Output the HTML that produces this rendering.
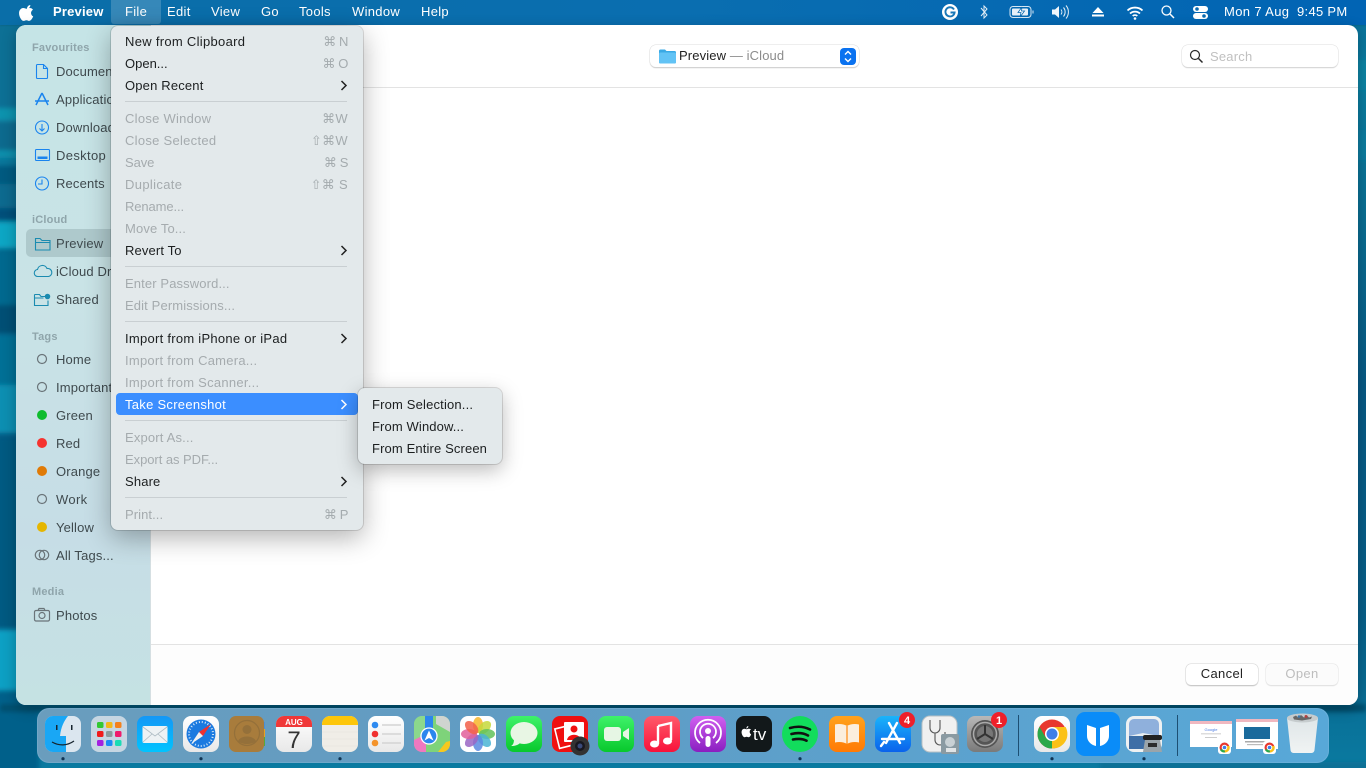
<!DOCTYPE html>
<html><head><meta charset="utf-8"><style>
html,body{margin:0;padding:0;width:1366px;height:768px;overflow:hidden;background:#055a80}
*{box-sizing:border-box}
body{font-family:"Liberation Sans",sans-serif;font-size:13px;position:relative}
.a{position:absolute;white-space:nowrap;line-height:16px}
.mb{position:absolute;left:0;top:0;width:1366px;height:25px;background:linear-gradient(90deg,#0a6ea8,#0a6eb0 50%,#0164b4);box-shadow:0 0 2px rgba(0,0,0,.2)}
.mb span{position:absolute;top:4px;line-height:16px;color:#fff;letter-spacing:.3px;white-space:nowrap}
.win{position:absolute;left:16px;top:25px;width:1342px;height:680px;background:#fff;border-radius:10px;overflow:hidden;box-shadow:0 4px 14px rgba(0,0,0,.28)}
.side{position:absolute;left:0;top:0;width:135px;height:680px;background:linear-gradient(180deg,#c5e4e6,#c9e3e6 40%,#c6dde6 75%,#c5e2e3);border-right:1px solid #d5dfe2}
.s{position:absolute;left:40px;margin-top:1px;color:#3f4a4e;letter-spacing:.15px;line-height:16px;white-space:nowrap}
.h{position:absolute;left:16px;color:#8fa5ab;font-size:11px;font-weight:bold;letter-spacing:.2px;line-height:14px}
.menu{position:absolute;left:111px;top:26px;width:252px;height:504px;background:#e3e9eb;border-radius:7px;box-shadow:0 0 0 1px rgba(0,0,0,.13),0 8px 26px rgba(0,0,0,.3)}
.m{position:absolute;left:14px;margin-top:1px;line-height:16px;color:#1c1f20;letter-spacing:.27px;white-space:nowrap}
.d{color:#a5abae}
.k{position:absolute;right:15px;margin-top:1px;line-height:16px;color:#a4abae;letter-spacing:.3px;white-space:nowrap;font-family:"Liberation Sans","DejaVu Sans",sans-serif}
.k.n{letter-spacing:-.4px}
.sep{position:absolute;left:14px;width:222px;height:1px;background:#c9cfd2}
.chev{position:absolute;left:229px;width:8px;height:11px}
</style></head><body>
<svg class="a" style="left:0;top:0" width="1366" height="768" viewBox="0 0 1366 768">
<defs>
<filter id="b6" x="-50%" y="-50%" width="200%" height="200%"><feGaussianBlur stdDeviation="2"/></filter>
<linearGradient id="wp" x1="0" y1="0" x2="0" y2="1"><stop offset="0" stop-color="#0a6d98"/><stop offset=".1" stop-color="#0a7fa2"/><stop offset=".28" stop-color="#0a6f94"/><stop offset=".5" stop-color="#075a85"/><stop offset=".8" stop-color="#07608a"/><stop offset="1" stop-color="#0a7aa0"/></linearGradient>
</defs>
<rect width="1366" height="768" fill="url(#wp)"/>
<g filter="url(#b6)">
<rect x="-6" y="20" width="26" height="90" fill="#0a6f95"/>
<rect x="-6" y="108" width="26" height="12" fill="#0b93ae"/>
<rect x="-6" y="122" width="26" height="28" fill="#086a8e"/>
<rect x="-6" y="150" width="26" height="8" fill="#0c8eac"/>
<rect x="-6" y="166" width="26" height="18" fill="#055a80"/>
<rect x="-6" y="184" width="26" height="24" fill="#086b8f"/>
<rect x="-6" y="208" width="26" height="12" fill="#04507a"/>
<rect x="-6" y="222" width="26" height="26" fill="#08a6c4"/>
<rect x="-6" y="250" width="26" height="55" fill="#06698f"/>
<rect x="-6" y="305" width="26" height="28" fill="#044f75"/>
<rect x="-6" y="335" width="26" height="50" fill="#066f96"/>
<rect x="-6" y="385" width="26" height="48" fill="#098fb2"/>
<rect x="-6" y="437" width="26" height="190" fill="#055a82"/>
<rect x="-6" y="630" width="26" height="60" fill="#08a0c4"/>
<rect x="-6" y="692" width="45" height="80" fill="#04608a"/>
<rect x="1356" y="60" width="16" height="30" fill="#0a84a4"/>
<rect x="1356" y="130" width="16" height="30" fill="#0a7da0"/>
<rect x="0" y="704" width="1366" height="8" fill="#045070"/>
<rect x="1100" y="762" width="270" height="10" fill="#0a6f95"/>
</g>
</svg>

<div class="mb">
<svg class="a" style="left:19px;top:4px" width="16" height="17" viewBox="0 0 16 17"><path fill="#fff" d="M11.3 1c.1 1-.3 1.900-.9 2.600-.6.700-1.500 1.200-2.400 1.100-.1-1 .4-1.900.9-2.500C9.500 1.500 10.500 1 11.300 1zM14.200 12.400c-.4.900-.6 1.300-1.100 2.100-.7 1.100-1.700 2.400-2.900 2.400-1.100 0-1.400-.7-2.800-.7s-1.800.7-2.900.7c-1.200 0-2.100-1.200-2.800-2.300C-.2 11.600-.4 8 .8 6.100c.9-1.300 2.200-2.100 3.500-2.100s2.200.8 3.200.8 1.700-.8 3.300-.8c1.200 0 2.400.6 3.200 1.700-2.900 1.600-2.400 5.600.2 6.700z"/></svg>
<span style="left:53px;font-weight:bold;letter-spacing:.2px">Preview</span>
<div class="a" style="left:111px;top:0;width:50px;height:24px;background:rgba(255,255,255,.18);border-radius:0 0 3px 3px"></div>
<span style="left:125px">File</span>
<span style="left:167px">Edit</span>
<span style="left:211px">View</span>
<span style="left:261px">Go</span>
<span style="left:299px">Tools</span>
<span style="left:352px">Window</span>
<span style="left:421px">Help</span>
<svg class="a" style="left:940px;top:0" width="270" height="25" viewBox="940 0 270 25">
<circle cx="950" cy="12" r="8" fill="#fff"/><path d="M954 9.500A4.600 4.600 0 1 0 954.600 12.500H950.500" fill="none" stroke="#1a78b8" stroke-width="1.900"/>
<path d="M981 8l6 7-3 3V6l3 3-6 7" fill="none" stroke="#e4eef6" stroke-width="1"/>
<rect x="1010" y="6.500" width="21" height="11" rx="3" fill="none" stroke="#d8e8f4"/><rect x="1012" y="8.500" width="16" height="7" rx="1" fill="#e6f0f8"/><path d="M1022 7l-4 5.500h3l-1 4.500 4.500-6h-3z" fill="#fff" stroke="#0a6ab0" stroke-width=".8"/><rect x="1032.500" y="10.500" width="1" height="3" fill="#d8e8f4"/>
<path d="M1052 9.500h3l4-3.500v12l-4-3.500h-3z" fill="#f0f6fb"/><path d="M1061 9.500a4 4 0 0 1 0 5M1063.500 7.500a7 7 0 0 1 0 9M1066 5.500a10 10 0 0 1 0 13" fill="none" stroke="#e8f1f8" stroke-width="1"/>
<path d="M1098 7l5.500 6h-11z" fill="#fff"/><rect x="1092" y="14.500" width="12" height="2" fill="#fff"/>
<path d="M1127.500 10.500a11 11 0 0 1 15 0M1130 13.500a7.500 7.500 0 0 1 10 0M1132.700 16a3.500 3.500 0 0 1 4.600 0" fill="none" stroke="#fff" stroke-width="1.800"/><circle cx="1135" cy="18.500" r="1.300" fill="#fff"/>
<circle cx="1166.500" cy="10.500" r="4.500" fill="none" stroke="#fff" stroke-width="1.300"/><path d="M1170 14l4 4" stroke="#fff" stroke-width="1.500"/>
<rect x="1193" y="6" width="15" height="6" rx="3" fill="#fff"/><rect x="1193" y="13" width="15" height="6" rx="3" fill="#fff"/><circle cx="1197" cy="9" r="1.800" fill="#0a6ab0"/><circle cx="1204" cy="16" r="1.800" fill="#0a6ab0"/>
</svg>
<span style="left:1224px;letter-spacing:.36px">Mon 7 Aug</span>
<span style="left:1297px;letter-spacing:.3px">9:45 PM</span>
</div>

<div class="win">
<div class="side">
<div class="h" style="top:16px">Favourites</div>
<div class="s" style="top:38px">Documents</div>
<div class="s" style="top:66px">Applications</div>
<div class="s" style="top:94px">Downloads</div>
<div class="s" style="top:122px;letter-spacing:.35px">Desktop</div>
<div class="s" style="top:150px">Recents</div>
<div class="h" style="top:188px">iCloud</div>
<div class="a" style="left:10px;top:204px;width:115px;height:28px;background:#aec9cc;border-radius:5px"></div>
<div class="s" style="top:210px">Preview</div>
<div class="s" style="top:238px">iCloud Drive</div>
<div class="s" style="top:266px">Shared</div>
<div class="h" style="top:305px">Tags</div>
<div class="s" style="top:326px">Home</div>
<div class="s" style="top:354px">Important</div>
<div class="s" style="top:382px">Green</div>
<div class="s" style="top:410px">Red</div>
<div class="s" style="top:438px">Orange</div>
<div class="s" style="top:466px;letter-spacing:.35px">Work</div>
<div class="s" style="top:494px">Yellow</div>
<div class="s" style="top:522px">All Tags...</div>
<div class="h" style="top:560px">Media</div>
<div class="s" style="top:582px">Photos</div>
<svg class="a" style="left:0;top:0" width="40" height="680" viewBox="16 25 40 680">
<g fill="none" stroke="#1a84ee" stroke-width="1.100">
<path d="M37.500 64.500h6l4 4v9a1 1 0 0 1-1 1h-9a1 1 0 0 1-1-1v-12a1 1 0 0 1 1-1zM43.500 64.500v4h4"/>
<path d="M36 105l6-12M48 105l-6-12M35 101h14" stroke-width="1.500"/>
<circle cx="42" cy="127.500" r="6.500"/><path d="M42 124v6.500M39.500 128.500l2.500 2.500 2.500-2.500"/>
<rect x="35.500" y="149.500" width="14" height="11" rx="1"/><rect x="37.500" y="156.500" width="10" height="2.500" fill="#1a84ee" stroke="none"/>
<circle cx="42" cy="183.500" r="6.500"/><path d="M42 179.500v4.500h-4"/>
</g>
<g fill="none" stroke="#1b8bb0" stroke-width="1.100">
<path d="M35.500 238.500h4.500l2 2h8v9.500h-14.500zM35.500 242.500h14.500"/>
<path d="M38 276.500a3.500 3.500 0 0 1-.5-7 5 5 0 0 1 9.500-1 4 4 0 0 1 1.500 8z"/>
<path d="M34.500 294.500h5l1.500 2h4M34.500 294.500v11h13.500v-5M34.500 298h9"/><circle cx="47.500" cy="296.500" r="2.200" fill="#1b8bb0"/>
</g>
<g fill="none" stroke="#6a7479" stroke-width="1.200">
<circle cx="42" cy="359" r="4.500"/><circle cx="42" cy="387" r="4.500"/><circle cx="42" cy="499" r="4.500"/>
<circle cx="40" cy="555" r="4.700"/><circle cx="44" cy="555" r="4.700"/>
<rect x="34.500" y="610.500" width="15" height="10.500" rx="1.500"/><circle cx="42" cy="615.500" r="3"/><path d="M38 610.500l1-2h5l1 2"/>
</g>
<circle cx="42" cy="415" r="5" fill="#0ebc2e"/><circle cx="42" cy="443" r="5" fill="#f5332f"/><circle cx="42" cy="471" r="5" fill="#e07a06"/><circle cx="42" cy="527" r="5" fill="#e5b600"/>
</svg>
</div>
<div class="a" style="left:135px;top:62px;width:1207px;height:1px;background:#e3e3e3"></div>
<div class="a" style="left:135px;top:619px;width:1207px;height:1px;background:#e3e3e3"></div>
<div class="a" style="left:135px;top:620px;width:1207px;height:60px;background:#fdfdfd"></div>

<div class="a" style="left:634px;top:20px;width:209px;height:22px;background:#fff;border-radius:6px;box-shadow:0 0 0 .5px #dcdcdc,0 1px 1px #b8b8b8"></div>
<svg class="a" style="left:643px;top:24px" width="17" height="15" viewBox="0 0 17 15"><path d="M0 2a1.500 1.500 0 0 1 1.500-1.500h4.500l1.500 1.500h8a1.500 1.500 0 0 1 1.500 1.500v9.500a1.500 1.500 0 0 1-1.500 1.500h-14a1.500 1.500 0 0 1-1.500-1.500z" fill="#3aa9e4"/><rect y="3.500" width="17" height="11" rx="1.500" fill="#62c3f5"/></svg>
<div class="a" style="left:663px;top:23px;color:#222;letter-spacing:.12px">Preview <span style="color:#8c8c8c">— iCloud</span></div>
<svg class="a" style="left:824px;top:23px" width="16" height="17" viewBox="0 0 16 17"><rect width="16" height="17" rx="4" fill="#0a72f0"/><path d="M5 6.500l3-3 3 3M5 10.500l3 3 3-3" fill="none" stroke="#fff" stroke-width="1.400"/></svg>

<div class="a" style="left:1166px;top:20px;width:156px;height:22px;background:#fff;border-radius:6px;box-shadow:0 0 0 .5px #dedede,0 1px 1px #c4c4c4"></div>
<svg class="a" style="left:1173px;top:24px" width="15" height="15" viewBox="0 0 15 15"><circle cx="6" cy="6" r="4.500" fill="none" stroke="#2a2a2a" stroke-width="1.200"/><path d="M9.500 9.500l4 4" stroke="#2a2a2a" stroke-width="1.500"/></svg>
<div class="a" style="left:1194px;top:24px;color:#c0c0c0;letter-spacing:.2px">Search</div>

<div class="a" style="left:1170px;top:639px;width:72px;height:21px;background:#fff;border-radius:5px;box-shadow:0 0 0 .5px #d4d4d4,0 1px 1px #aaa;text-align:center;line-height:20px;color:#222;letter-spacing:.35px">Cancel</div>
<div class="a" style="left:1250px;top:639px;width:72px;height:21px;background:#fbfbfb;border-radius:5px;box-shadow:0 0 0 .5px #e4e4e4,0 1px 1px #d8d8d8;text-align:center;line-height:20px;color:#bdbdbd;letter-spacing:.35px">Open</div>
</div>

<div class="menu">
<div class="m" style="top:7px;letter-spacing:.3px">New from Clipboard</div><div class="k n" style="top:7px">⌘ N</div>
<div class="m" style="top:29px;letter-spacing:0">Open...</div><div class="k n" style="top:29px">⌘ O</div>
<div class="m" style="top:51px;letter-spacing:.17px">Open Recent</div>
<div class="sep" style="top:75px"></div>
<div class="m d" style="top:84px">Close Window</div><div class="k" style="top:84px">⌘W</div>
<div class="m d" style="top:106px;letter-spacing:.28px">Close Selected</div><div class="k" style="top:106px">⇧⌘W</div>
<div class="m d" style="top:128px;letter-spacing:-.1px">Save</div><div class="k n" style="top:128px">⌘ S</div>
<div class="m d" style="top:150px;letter-spacing:.35px">Duplicate</div><div class="k" style="top:150px">⇧⌘ S</div>
<div class="m d" style="top:172px;letter-spacing:-.1px">Rename...</div>
<div class="m d" style="top:194px;letter-spacing:.13px">Move To...</div>
<div class="m" style="top:216px;letter-spacing:.13px">Revert To</div>
<div class="sep" style="top:240px"></div>
<div class="m d" style="top:249px;letter-spacing:.12px">Enter Password...</div>
<div class="m d" style="top:271px;letter-spacing:.13px">Edit Permissions...</div>
<div class="sep" style="top:295px"></div>
<div class="m" style="top:304px">Import from iPhone or iPad</div>
<div class="m d" style="top:326px;letter-spacing:.25px">Import from Camera...</div>
<div class="m d" style="top:348px;letter-spacing:.26px">Import from Scanner...</div>
<div class="a" style="left:5px;top:367px;width:242px;height:22px;background:#3b8eff;border-radius:4px"></div>
<div class="m" style="top:370px;color:#fff;letter-spacing:.28px">Take Screenshot</div>
<div class="sep" style="top:394px"></div>
<div class="m d" style="top:403px;letter-spacing:.17px">Export As...</div>
<div class="m d" style="top:425px;letter-spacing:-.05px">Export as PDF...</div>
<div class="m" style="top:447px;letter-spacing:.15px">Share</div>
<div class="sep" style="top:471px"></div>
<div class="m d" style="top:480px;letter-spacing:.07px">Print...</div><div class="k n" style="top:480px">⌘ P</div>
<svg class="chev" style="top:54px" viewBox="0 0 8 11"><path d="M1.500 1l4.500 4.500-4.500 4.500" fill="none" stroke="#222" stroke-width="1.500"/></svg>
<svg class="chev" style="top:219px" viewBox="0 0 8 11"><path d="M1.500 1l4.500 4.500-4.500 4.500" fill="none" stroke="#222" stroke-width="1.500"/></svg>
<svg class="chev" style="top:307px" viewBox="0 0 8 11"><path d="M1.500 1l4.500 4.500-4.500 4.500" fill="none" stroke="#222" stroke-width="1.500"/></svg>
<svg class="chev" style="top:373px" viewBox="0 0 8 11"><path d="M1.500 1l4.500 4.500-4.500 4.500" fill="none" stroke="#fff" stroke-width="1.500"/></svg>
<svg class="chev" style="top:450px" viewBox="0 0 8 11"><path d="M1.500 1l4.500 4.500-4.500 4.500" fill="none" stroke="#222" stroke-width="1.500"/></svg>
</div>

<div class="a" style="left:358px;top:388px;width:144px;height:76px;background:#e3e9eb;border-radius:7px;box-shadow:0 0 0 1px rgba(0,0,0,.13),0 6px 20px rgba(0,0,0,.28)">
<div class="m" style="top:8px;letter-spacing:.17px">From Selection...</div>
<div class="m" style="top:30px;letter-spacing:.12px">From Window...</div>
<div class="m" style="top:52px;letter-spacing:.13px">From Entire Screen</div>
</div>

<svg class="a" style="left:0;top:700px" width="1366" height="68" viewBox="0 700 1366 68" font-family="Liberation Sans, sans-serif">
<defs>
<linearGradient id="dock" x1="0" x2="1" y1="0" y2="0"><stop offset="0" stop-color="#6a9dbd"/><stop offset=".4" stop-color="#5f9cc4"/><stop offset="1" stop-color="#58a8d8"/></linearGradient>
<linearGradient id="bl" x1="0" x2="0" y1="0" y2="1"><stop offset="0" stop-color="#1597f5"/><stop offset="1" stop-color="#00c4ff"/></linearGradient>
<linearGradient id="gr" x1="0" x2="0" y1="0" y2="1"><stop offset="0" stop-color="#3ef26a"/><stop offset="1" stop-color="#08c82c"/></linearGradient>
<linearGradient id="rd" x1="0" x2="0" y1="0" y2="1"><stop offset="0" stop-color="#ff5a6a"/><stop offset="1" stop-color="#f8123a"/></linearGradient>
<linearGradient id="pu" x1="0" x2="0" y1="0" y2="1"><stop offset="0" stop-color="#d060f0"/><stop offset="1" stop-color="#8a1ec0"/></linearGradient>
<linearGradient id="as" x1="0" x2="0" y1="0" y2="1"><stop offset="0" stop-color="#1ab4fa"/><stop offset="1" stop-color="#0a62ec"/></linearGradient>
<linearGradient id="or" x1="0" x2="0" y1="0" y2="1"><stop offset="0" stop-color="#ffa21c"/><stop offset="1" stop-color="#ff7a04"/></linearGradient>
<linearGradient id="gy" x1="0" x2="0" y1="0" y2="1"><stop offset="0" stop-color="#b8b8b8"/><stop offset="1" stop-color="#7a7a7a"/></linearGradient>
<linearGradient id="wh" x1="0" x2="0" y1="0" y2="1"><stop offset="0" stop-color="#fff"/><stop offset="1" stop-color="#e8e8e8"/></linearGradient>
<linearGradient id="tr" x1="0" x2="0" y1="0" y2="1"><stop offset="0" stop-color="#dfe6e8"/><stop offset="1" stop-color="#f0f3f3"/></linearGradient>
</defs>
<rect x="37" y="708" width="1292" height="55" rx="12" fill="url(#dock)"/>
<rect x="37.500" y="708.500" width="1291" height="54" rx="12" fill="none" stroke="#8cc0de" stroke-opacity=".3"/>
<rect x="1018" y="715" width="1" height="41" fill="#1d4f73"/><rect x="1177" y="715" width="1" height="41" fill="#1d4f73"/>
<g fill="#0f3454"><circle cx="63" cy="758.700" r="1.600"/><circle cx="201" cy="758.700" r="1.600"/><circle cx="340" cy="758.700" r="1.600"/><circle cx="800" cy="758.700" r="1.600"/><circle cx="1052" cy="758.700" r="1.600"/><circle cx="1144" cy="758.700" r="1.600"/></g>

<g transform="translate(45,716)"><rect width="36" height="36" rx="8" fill="#dbe6ef"/><path d="M8 0h15c-4 5-7 11-8 20h6v16H8a8 8 0 0 1-8-8V8a8 8 0 0 1 8-8z" fill="#19a7f5"/><path d="M7 26c7 4 15 4 22-1" fill="none" stroke="#16242e" stroke-width="1.200"/><rect x="11" y="9" width="1.500" height="5" fill="#16242e"/><rect x="26" y="9" width="1.500" height="5" fill="#16242e"/></g>

<g transform="translate(91,716)"><rect width="36" height="36" rx="8" fill="#c6d6e2"/><g><rect x="6" y="6" width="6.500" height="6" rx="1.500" fill="#32c833"/><rect x="15" y="6" width="6.500" height="6" rx="1.500" fill="#f2b71a"/><rect x="24" y="6" width="6.500" height="6" rx="1.500" fill="#f4811c"/><rect x="6" y="15" width="6.500" height="6" rx="1.500" fill="#f01a1a"/><rect x="15" y="15" width="6.500" height="6" rx="1.500" fill="#8a9a9c"/><rect x="24" y="15" width="6.500" height="6" rx="1.500" fill="#ef1a6c"/><rect x="6" y="24" width="6.500" height="6" rx="1.500" fill="#a320e0"/><rect x="15" y="24" width="6.500" height="6" rx="1.500" fill="#1a8cf4"/><rect x="24" y="24" width="6.500" height="6" rx="1.500" fill="#1adcb4"/></g></g>

<g transform="translate(137,716)"><rect width="36" height="36" rx="8" fill="url(#bl)"/><rect x="5.500" y="10" width="25" height="17" rx="1.500" fill="#edf2f4"/><path d="M6 11l12 9 12-9M6 26l9-8M30 26l-9-8" fill="none" stroke="#aebcc4" stroke-width=".8"/></g>

<g transform="translate(183,716)"><rect width="36" height="36" rx="8" fill="url(#wh)"/><circle cx="18" cy="18" r="14.500" fill="#1b7ae0"/><circle cx="18" cy="18" r="12" fill="none" stroke="#d4e8f8" stroke-width="2" stroke-dasharray="1 2"/><path d="M28 8L16 16l4 4z" fill="#f03030"/><path d="M8 28l8-12 4 4z" fill="#f2f2f2"/></g>

<g transform="translate(229,716)"><rect x="31" y="6" width="5" height="7" fill="#4a90d8"/><rect x="31" y="13" width="5" height="8" fill="#e9a020"/><rect x="31" y="21" width="5" height="9" fill="#58a838"/><rect width="35" height="36" rx="7" fill="#a87c3c"/><circle cx="18" cy="17" r="12.500" fill="none" stroke="#94703a" stroke-width="1.200"/><circle cx="18" cy="13.500" r="4.500" fill="#94703a"/><path d="M9 25c3-6 15-6 18 0-4 4-14 4-18 0z" fill="#94703a"/></g>

<g transform="translate(276,716)"><rect width="36" height="36" rx="8" fill="url(#wh)"/><path d="M0 11V8a8 8 0 0 1 8-8h20a8 8 0 0 1 8 8v3z" fill="#f03838"/><text x="18" y="8.800" font-size="8" font-weight="bold" fill="#fff" text-anchor="middle">AUG</text><text x="18" y="32" font-size="24" fill="#333" text-anchor="middle">7</text></g>

<g transform="translate(322,716)"><rect width="36" height="36" rx="8" fill="#f0ede7"/><path d="M0 9V8a8 8 0 0 1 8-8h20a8 8 0 0 1 8 8v1z" fill="#fdc60a"/><path d="M0 16h36M0 23h36M0 30h36" stroke="#e4e0d9" stroke-width=".6"/></g>

<g transform="translate(368,716)"><rect width="36" height="36" rx="8" fill="url(#wh)"/><circle cx="7" cy="9" r="3.300" fill="#2e8af0"/><circle cx="7" cy="18" r="3.300" fill="#f03030"/><circle cx="7" cy="27" r="3.300" fill="#f4932a"/><path d="M14 9h19M14 18h19M14 27h19" stroke="#d4d4d4" stroke-width="1.500"/></g>

<g transform="translate(414,716)"><rect width="36" height="36" rx="8" fill="#7ed37a"/><path d="M0 30V8a8 8 0 0 1 8-8h4v20z" fill="#8cd88c"/><path d="M0 24l12-6v18H8a8 8 0 0 1-8-8z" fill="#ef78c0"/><path d="M24 36l8-10 4-1v3a8 8 0 0 1-8 8z" fill="#f7c81e"/><path d="M11 0h8v14h-8z" fill="#2c87ee"/><path d="M22 0h6a8 8 0 0 1 8 8v8l-14-8z" fill="#d0d4d0"/><circle cx="15" cy="20" r="8" fill="#2b86ee" stroke="#fff" stroke-width="1.300"/><path d="M15 14.500l4.500 10-4.500-2.500-4.500 2.500z" fill="#fff"/></g>

<g transform="translate(460,716)"><rect width="36" height="36" rx="8" fill="#fff"/><g transform="translate(18,18)"><ellipse cy="-9" rx="5" ry="8" fill="#f7b52a" opacity=".85"/><ellipse cy="-9" rx="5" ry="8" fill="#c6d83a" opacity=".85" transform="rotate(45)"/><ellipse cy="-9" rx="5" ry="8" fill="#62c25a" opacity=".85" transform="rotate(90)"/><ellipse cy="-9" rx="5" ry="8" fill="#4ab4d4" opacity=".85" transform="rotate(135)"/><ellipse cy="-9" rx="5" ry="8" fill="#5a8ae0" opacity=".85" transform="rotate(180)"/><ellipse cy="-9" rx="5" ry="8" fill="#9a66c4" opacity=".85" transform="rotate(225)"/><ellipse cy="-9" rx="5" ry="8" fill="#e2609a" opacity=".85" transform="rotate(270)"/><ellipse cy="-9" rx="5" ry="8" fill="#f2604a" opacity=".85" transform="rotate(315)"/></g></g>

<g transform="translate(506,716)"><rect width="36" height="36" rx="8" fill="url(#gr)"/><ellipse cx="18" cy="17" rx="13.500" ry="11" fill="#e8f6e4"/><path d="M8 23c0 4-1 6-3 7 4 0 7-1 9-3z" fill="#e8f6e4"/></g>

<g transform="translate(552,716)"><rect width="36" height="36" rx="8" fill="#f01010"/><rect x="5" y="11" width="15" height="20" fill="none" stroke="#fff" stroke-width="1.600" transform="rotate(-14 12 21)"/><rect x="12" y="6" width="20" height="20" rx="1" fill="#fff"/><circle cx="22" cy="13" r="3.500" fill="#f01010"/><path d="M15 24c1-7 13-7 14 0z" fill="#f01010"/><circle cx="28" cy="30" r="9.500" fill="#333"/><circle cx="28" cy="30" r="5" fill="#181820"/><circle cx="28" cy="30" r="2.500" fill="#3a4a7a"/></g>

<g transform="translate(598,716)"><rect width="36" height="36" rx="8" fill="url(#gr)"/><rect x="6" y="11" width="17" height="14" rx="3" fill="#e6f6e4"/><path d="M25 16l6-4v12l-6-4z" fill="#e6f6e4"/></g>

<g transform="translate(644,716)"><rect width="36" height="36" rx="8" fill="url(#rd)"/><path d="M14 10l13-3v17" fill="none" stroke="#fff" stroke-width="2.400"/><path d="M14 10v18" stroke="#fff" stroke-width="2.400"/><ellipse cx="10.500" cy="28" rx="4.500" ry="3.500" fill="#fff"/><ellipse cx="23.500" cy="25" rx="4.500" ry="3.500" fill="#fff"/></g>

<g transform="translate(690,716)"><rect width="36" height="36" rx="8" fill="url(#pu)"/><g fill="none" stroke="#fff" stroke-width="1.800"><path d="M10 27a13 13 0 1 1 16 0"/><path d="M13 22a8 8 0 1 1 10 0"/></g><circle cx="18" cy="15" r="3" fill="#fff"/><rect x="15.500" y="20" width="5" height="11" rx="2.500" fill="#fff"/></g>

<g transform="translate(736,716)"><rect width="36" height="36" rx="8" fill="#12181a"/><text x="17" y="24" font-size="17" fill="#fff">tv</text><path d="M13 12.800c-1-.2-1.700.5-2.500.5s-1.500-.6-2.400-.5c-2 .3-3 2.500-2.300 5 .4 1.500 1.500 3.500 2.800 3.500.7 0 1.100-.5 2-.5s1.200.5 2 .5c1.200 0 2.200-1.800 2.500-3-1.800-.8-2-3.800 0-5zM10.300 12.500c0-1.200.9-2.300 2-2.500.1 1.300-.9 2.500-2 2.500z" fill="#fff"/></g>

<circle cx="800" cy="734" r="18" fill="#12dc5c"/><path d="M790 728c7-2 14-1.500 20 1.500M791.500 734c6-1.500 12-1 16.500 1.500M793 739.500c5-1 10-.7 13.500 1.200" fill="none" stroke="#111" stroke-width="2.600" stroke-linecap="round"/>

<g transform="translate(829,716)"><rect width="36" height="36" rx="8" fill="url(#or)"/><path d="M18 10c-3-2-8-2.500-12-1.500v18c4-1 9-.5 12 1.500 3-2 8-2.500 12-1.500v-18c-4-1-9-.5-12 1.500z" fill="#fbeedd"/><path d="M18 10v18" stroke="#ff8a10" stroke-width="1.200"/></g>

<g transform="translate(875,716)"><rect width="36" height="36" rx="8" fill="url(#as)"/><g fill="none" stroke="#fff" stroke-width="2.400" stroke-linecap="round"><path d="M22 7L11 27M14 7l11 20M7 23h22"/><path d="M6 30l3-4" /></g></g>
<circle cx="907" cy="720" r="8" fill="#ee1f2a"/><text x="907" y="724" font-size="11" font-weight="bold" fill="#fff" text-anchor="middle">4</text>

<g transform="translate(922,716)"><rect width="35" height="36" rx="8" fill="#f0f0f0" stroke="#b8c0c4"/><path d="M8 4v8a5 5 0 0 0 10 0V4M13 17v7a5 5 0 0 0 10 0v-8" fill="none" stroke="#555" stroke-width="1.100"/><rect x="19" y="18" width="18" height="20" rx="2" fill="#8a9aa2"/><circle cx="28" cy="26" r="5" fill="#c8d0d4"/><rect x="24" y="32" width="10" height="4" fill="#e0e4e6"/></g>

<g transform="translate(967,716)"><rect width="36" height="36" rx="8" fill="url(#gy)"/><circle cx="18" cy="18" r="14" fill="#555"/><circle cx="18" cy="18" r="11.500" fill="none" stroke="#aaa" stroke-width="1.500"/><circle cx="18" cy="18" r="8" fill="#777"/><path d="M18 18V9M18 18l-8 5M18 18l8 5" stroke="#333" stroke-width="2"/></g>
<circle cx="999" cy="720" r="8" fill="#ee1f2a"/><text x="999" y="724" font-size="11" font-weight="bold" fill="#fff" text-anchor="middle">1</text>

<g transform="translate(1034,716)"><rect width="36" height="36" rx="8" fill="url(#wh)"/><circle cx="18" cy="18" r="14.500" fill="#e8382e"/><path d="M18 18L5.500 25.300A14.500 14.500 0 0 0 18 32.500z" fill="#2aa84a"/><path d="M18 11h13.600A14.500 14.500 0 0 1 18 32.500z" fill="#fbc116"/><path d="M5.500 10.700L12 22 5.500 25.300A14.500 14.500 0 0 1 5.500 10.700z" fill="#2aa84a"/><circle cx="18" cy="18" r="7" fill="#fff"/><circle cx="18" cy="18" r="5.500" fill="#3f7fe8"/></g>

<g transform="translate(1076,712)"><rect width="44" height="44" rx="9" fill="#0a8cf8"/><path d="M11 13l9 3v18c-5-1-9-5-9-10z M33 13l-9 3v18c5-1 9-5 9-10z" fill="#fff"/></g>

<g transform="translate(1126,716)"><rect width="36" height="36" rx="8" fill="#eef1f2"/><rect x="3" y="3" width="30" height="30" rx="5" fill="#8fb0dc"/><rect x="3" y="20" width="30" height="13" fill="#3e6ea6"/><path d="M3 20l14-3 16 3z" fill="#e8eef2"/><rect x="17" y="19" width="19" height="5" rx="2" fill="#222"/><path d="M19 24h15l2 12H17z" fill="#9aa4aa"/><rect x="22" y="27" width="9" height="4" fill="#2c2c2c"/></g>

<g transform="translate(1190,721)"><rect width="42" height="26" fill="#fff"/><rect width="42" height="3" fill="#f0b8c0"/><text x="21" y="10" font-size="4" fill="#4a7ae0" text-anchor="middle">Google</text><rect x="11" y="12" width="20" height="1.500" fill="#ddd"/><rect x="15" y="16" width="12" height="1" fill="#ccc"/></g>
<g transform="translate(1218,741)"><rect width="13" height="13" rx="3" fill="#fff"/><circle cx="6.500" cy="6.500" r="5" fill="#e8382e"/><path d="M6.500 6.500L2 9a5 5 0 0 0 5 2.500z" fill="#2aa84a"/><path d="M6.500 5h5a5 5 0 0 1-4.500 6.500z" fill="#fbc116"/><circle cx="6.500" cy="6.500" r="2.300" fill="#3f7fe8" stroke="#fff"/></g>

<g transform="translate(1236,719)"><rect width="42" height="30" fill="#fff"/><rect width="42" height="3" fill="#f0b8c0"/><rect x="8" y="8" width="26" height="12" fill="#1a6a9c"/><rect x="9" y="22" width="24" height="1.500" fill="#aaa"/><rect x="11" y="25" width="20" height="1.200" fill="#bbb"/></g>
<g transform="translate(1263,741)"><rect width="13" height="13" rx="3" fill="#fff"/><circle cx="6.500" cy="6.500" r="5" fill="#e8382e"/><path d="M6.500 6.500L2 9a5 5 0 0 0 5 2.500z" fill="#2aa84a"/><path d="M6.500 5h5a5 5 0 0 1-4.500 6.500z" fill="#fbc116"/><circle cx="6.500" cy="6.500" r="2.300" fill="#3f7fe8" stroke="#fff"/></g>

<g transform="translate(1287,713)"><path d="M0 5h31l-3.500 32a3 3 0 0 1-3 3H6.500a3 3 0 0 1-3-3z" fill="url(#tr)"/><ellipse cx="15.500" cy="5" rx="15.500" ry="4.500" fill="#c6ccce"/><path d="M6 4l3-1.500 2 2 3-2.500 3 2.500 3-2 2 2 3-1-1 2.500-9 1.500-8-1z" fill="#666"/><circle cx="19" cy="3.500" r="1.500" fill="#b04040"/><circle cx="12" cy="3.500" r="1.300" fill="#3a7ab0"/></g>
</svg>
</body></html>
